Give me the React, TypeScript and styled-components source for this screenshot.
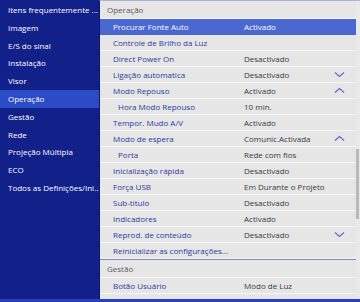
import * as React from "react";
import styled, { createGlobalStyle } from "styled-components";

const GlobalStyle = createGlobalStyle`
  html, body {
    margin: 0;
    padding: 0;
    background: #12208a;
  }
  body {
    font-family: "Open Sans", "Noto Sans", "DejaVu Sans", sans-serif;
  }
`;

const menuItems = [
  "Itens frequentemente ...",
  "Imagem",
  "E/S do sinal",
  "Instalação",
  "Visor",
  "Operação",
  "Gestão",
  "Rede",
  "Projeção Múltipla",
  "ECO",
  "Todos as Definições/Ini...",
];

type Row = {
  label: string;
  value?: string;
  sub?: boolean;
  chevron?: "up" | "down";
  active?: boolean;
};

const operacao: Row[] = [
  { label: "Procurar Fonte Auto", value: "Activado", active: true },
  { label: "Controle de Brilho da Luz" },
  { label: "Direct Power On", value: "Desactivado" },
  { label: "Ligação automatica", value: "Desactivado", chevron: "down" },
  { label: "Modo Repouso", value: "Activado", chevron: "up" },
  { label: "Hora Modo Repouso", value: "10 min.", sub: true },
  { label: "Tempor. Mudo A/V", value: "Activado" },
  { label: "Modo de espera", value: "Comunic.Activada", chevron: "up" },
  { label: "Porta", value: "Rede com fios", sub: true },
  { label: "Inicialização rápida", value: "Desactivado" },
  { label: "Força USB", value: "Em Durante o Projeto" },
  { label: "Sub-título", value: "Desactivado" },
  { label: "Indicadores", value: "Activado" },
  { label: "Reprod. de conteúdo", value: "Desactivado", chevron: "down" },
  { label: "Reinicializar as configurações..." },
];

const gestao: Row[] = [
  { label: "Botão Usuário", value: "Modo de Luz" },
  { label: "Lambda utilizado" },
];

const Chevron = ({ dir }: { dir: "up" | "down" }) => (
  <svg width="11" height="7" viewBox="0 0 11 7">
    <path
      d={dir === "down" ? "M1 1.5 L5.5 5.5 L10 1.5" : "M1 5.5 L5.5 1.5 L10 5.5"}
      fill="none"
      stroke="#5b6cc4"
      strokeWidth="1.1"
    />
  </svg>
);

export default function App() {
  return (
    <Screen>
      <GlobalStyle />
      <Main>
        <Sidebar>
          {menuItems.map((m) => (
            <MenuItem key={m} active={m === "Operação"}>
              {m}
            </MenuItem>
          ))}
        </Sidebar>
        <Panel>
          <List>
            <Header>Operação</Header>
            {operacao.map((r) => (
              <RowItem key={r.label} active={r.active}>
                <Label sub={r.sub} active={r.active}>
                  {r.label}
                </Label>
                <Value active={r.active}>{r.value}</Value>
                <ChevronCell>{r.chevron && <Chevron dir={r.chevron} />}</ChevronCell>
              </RowItem>
            ))}
            <Divider />
            <Header>Gestão</Header>
            {gestao.map((r) => (
              <RowItem key={r.label}>
                <Label>{r.label}</Label>
                <Value>{r.value}</Value>
                <ChevronCell />
              </RowItem>
            ))}
          </List>
          <ScrollTrack>
            <Thumb />
          </ScrollTrack>
        </Panel>
      </Main>
      <BottomBar />
    </Screen>
  );
}

const Screen = styled.div`
  width: 360px;
  height: 302px;
  display: flex;
  flex-direction: column;
  overflow: hidden;
  background: #12208a;
`;

const Main = styled.div`
  flex: 1;
  display: flex;
  min-height: 0;
`;

const Sidebar = styled.nav`
  width: 99px;
  flex-shrink: 0;
  background: #12208a;
  display: flex;
  flex-direction: column;
  padding-top: 1px;
`;

const MenuItem = styled.div<{ active?: boolean }>`
  height: 17.8px;
  line-height: 17.8px;
  padding-left: 8px;
  font-size: 8px;
  color: #ffffff;
  white-space: nowrap;
  overflow: hidden;
  background: ${(p) => (p.active ? "#2c4bc6" : "transparent")};
`;

const Panel = styled.section`
  flex: 1;
  display: flex;
  background: #e6e6e6;
  border-left: 1px solid #0d1870;
  border-top: 1px solid #aab3dc;
  min-height: 0;
  overflow: hidden;
`;

const List = styled.div`
  flex: 1;
  display: flex;
  flex-direction: column;
  min-width: 0;
`;

const Header = styled.div`
  height: 17px;
  line-height: 17px;
  padding-left: 7px;
  font-size: 8px;
  color: #5a5a5a;
  border-bottom: 1px solid #f6f6f6;
  flex-shrink: 0;
`;

const RowItem = styled.div<{ active?: boolean }>`
  height: 15px;
  flex-shrink: 0;
  display: grid;
  grid-template-columns: 144px 1fr 22px;
  align-items: center;
  font-size: 8px;
  background: ${(p) => (p.active ? "#4a68d0" : "transparent")};
  border-bottom: 1px solid ${(p) => (p.active ? "#4a68d0" : "#f6f6f6")};
`;

const Label = styled.span<{ sub?: boolean; active?: boolean }>`
  padding-left: ${(p) => (p.sub ? "18px" : "13px")};
  color: ${(p) => (p.active ? "#ffffff" : "#2b3b9e")};
  white-space: nowrap;
`;

const Value = styled.span<{ active?: boolean }>`
  color: ${(p) => (p.active ? "#ffffff" : "#3a3a3a")};
  white-space: nowrap;
`;

const ChevronCell = styled.span`
  display: flex;
  align-items: center;
  justify-content: flex-start;
`;

const Divider = styled.div`
  height: 1px;
  background: #7b8bd6;
  flex-shrink: 0;
`;

const ScrollTrack = styled.div`
  width: 4px;
  flex-shrink: 0;
  background: #e9e9e9;
  padding-top: 148px;
`;

const Thumb = styled.div`
  width: 3px;
  height: 70px;
  background: #b9b9b9;
`;

const BottomBar = styled.div`
  height: 3px;
  background: #2a40b8;
  flex-shrink: 0;
`;
